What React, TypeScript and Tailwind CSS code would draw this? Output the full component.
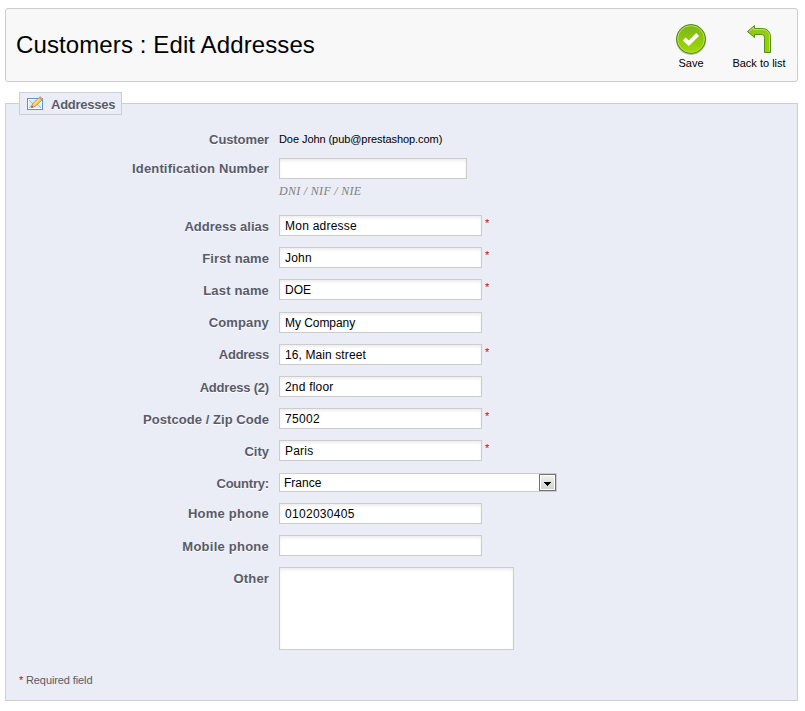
import { useState } from 'react';

type Field = {
  label: string;
  value: string;
  row: string;
  labelStyle: string;
  width?: string;
  required?: boolean;
  hint?: string;
  tracking?: string;
};

const identityFields: Field[] = [
  { label: 'Identification Number', value: '', row: 'h-[57px]', labelStyle: 'pt-[3px] tracking-[0.16px]', width: 'w-[188px]', hint: 'DNI / NIF / NIE' },
  { label: 'Address alias', value: 'Mon adresse', row: 'h-8', labelStyle: 'pt-1', required: true, tracking: 'tracking-[0.24px]' },
  { label: 'First name', value: 'John', row: 'h-8', labelStyle: 'pt-1 tracking-[0.1px]', required: true, tracking: 'tracking-[0.2px]' },
  { label: 'Last name', value: 'DOE', row: 'h-[33px]', labelStyle: 'pt-1 tracking-[0.16px]', required: true },
  { label: 'Company', value: 'My Company', row: 'h-8', labelStyle: 'pt-[3px] tracking-[0.16px]', tracking: 'tracking-[-0.05px]' },
  { label: 'Address', value: '16, Main street', row: 'h-8', labelStyle: 'pt-[3px] tracking-[-0.27px]', required: true, tracking: 'tracking-[0.1px]' },
  { label: 'Address (2)', value: '2nd floor', row: 'h-8', labelStyle: 'pt-1 tracking-[-0.2px]', tracking: 'tracking-[0.2px]' },
  { label: 'Postcode / Zip Code', value: '75002', row: 'h-8', labelStyle: 'pt-1 tracking-[0.05px]', required: true, tracking: 'tracking-[0.3px]' },
  { label: 'City', value: 'Paris', row: 'h-[33px]', labelStyle: 'pt-1', required: true, tracking: 'tracking-[0.2px]' },
];

const phoneFields: Field[] = [
  { label: 'Home phone', value: '0102030405', row: 'h-8', labelStyle: 'pt-[3px] tracking-[0.24px]', tracking: 'tracking-[0.3px]' },
  { label: 'Mobile phone', value: '', row: 'h-8', labelStyle: 'pt-1 tracking-[0.24px]' },
];

const inputStyle =
  'block border border-[#cccccc] bg-white text-black shadow-[inset_0_2px_3px_#eeeeee] focus:outline-none';

function Label({ text, style }: { text: string; style: string }) {
  return (
    <label
      className={`w-[250px] shrink-0 text-right text-[13px] leading-4 font-bold text-[#585a69] [text-shadow:0_1px_0_#ffffff] ${style}`}
    >
      {text}
    </label>
  );
}

function TextRow({ field }: { field: Field }) {
  const [value, setValue] = useState(field.value);

  return (
    <div className={`flex ${field.row}`}>
      <Label text={field.label} style={field.labelStyle} />
      <div className="ml-[10px]">
        <div className="flex">
          <input
            type="text"
            className={`${inputStyle} h-[21px] px-[5px] text-[12px] ${field.width || 'w-[203px]'} ${field.tracking || ''}`}
            value={value}
            onChange={(e) => setValue(e.target.value)}
          />
          {field.required && <span className="ml-[3px] text-[11px] leading-4 text-[#cc0000]">*</span>}
        </div>
        {field.hint && (
          <p className="mt-[5px] font-['Liberation_Serif',serif] text-[12px] leading-[14px] tracking-[0.3px] text-[#7f7f7f] italic">
            {field.hint}
          </p>
        )}
      </div>
    </div>
  );
}

function SaveIcon() {
  return (
    <svg className="h-8 w-8" viewBox="0 0 32 32">
      <defs>
        <linearGradient id="save-fill" x1="0" y1="0" x2="0" y2="1">
          <stop offset="0" stopColor="#79b51c" />
          <stop offset="1" stopColor="#a3d900" />
        </linearGradient>
      </defs>
      <ellipse cx="16" cy="17" rx="15" ry="15" fill="#b9b9b9" />
      <circle cx="16" cy="16" r="14.5" fill="url(#save-fill)" stroke="#4b8f0b" />
      <circle cx="16" cy="16" r="13.3" fill="none" stroke="#b6dc5c" />
      <path d="M9.2 16l4.6 4.3 8.8-8.8" fill="none" stroke="#ffffff" strokeWidth="4" />
    </svg>
  );
}

function BackIcon() {
  return (
    <svg className="h-8 w-8" viewBox="0 0 32 32">
      <defs>
        <linearGradient id="back-fill" x1="0" y1="0" x2="1" y2="1">
          <stop offset="0" stopColor="#8cc51c" />
          <stop offset="1" stopColor="#9bd100" />
        </linearGradient>
      </defs>
      <path
        d="M4.5 8.5L11.5 2.5V5.5H18.5C24.5 5.5 27.5 9 27.5 14.5V29.5H21.5V15.5C21.5 12.5 20.5 11.5 17.5 11.5H11.5V14.5Z"
        fill="url(#back-fill)"
        stroke="#4f930d"
        strokeLinejoin="round"
      />
      <path d="M6 8.5L10.5 4.6V6.5H18.5C24 6.5 26.5 9.5 26.5 14.5V28.5" fill="none" stroke="#bddf6b" />
    </svg>
  );
}

function EditIcon() {
  return (
    <svg className="h-4 w-4" viewBox="0 0 16 16">
      <rect x="0.5" y="2.5" width="15" height="11" fill="#dcebfb" stroke="#5b91cf" />
      <rect x="1.5" y="3.5" width="13" height="9" fill="none" stroke="#ffffff" />
      <path d="M2 12L6.5 8M14 12L10 8M2 4l5 5" fill="none" stroke="#9bbde5" />
      <path d="M4.5 11.5L5.5 8L12 1.5L15 4L8 10.5Z" fill="#f6ce58" stroke="#bd862f" strokeWidth="0.8" />
      <path d="M7 8.5L12.5 3" stroke="#fff0a5" />
      <path d="M12 1.5L13.3 0.6L15.8 3L15 4Z" fill="#ecaa8c" stroke="#c18069" strokeWidth="0.5" />
      <path d="M4.3 11.8L4.8 10L6.2 11Z" fill="#343434" />
    </svg>
  );
}

export default function App() {
  const [other, setOther] = useState('');

  return (
    <div className="h-[711px] w-[805px] bg-white pt-2 pl-[5px] font-['Liberation_Sans',Arial,sans-serif]">
      <header className="flex h-[74px] w-[793px] justify-between rounded-[3px] border border-[#cccccc] bg-[#f8f8f8] pl-[10px]">
        <h1 className="pt-[21px] text-[24px] leading-[30px] tracking-[0.11px] text-black">Customers : Edit Addresses</h1>
        <div className="flex pt-[14px] pr-[11px] text-[11px] leading-[14px] text-black">
          <button className="flex w-[32px] flex-col items-center">
            <SaveIcon />
            <span className="mt-[1px]">Save</span>
          </button>
          <button className="ml-[25px] flex w-[54px] flex-col items-center whitespace-nowrap">
            <BackIcon />
            <span className="mt-[1px]">Back to list</span>
          </button>
        </div>
      </header>

      <fieldset className="mt-[10px] w-[793px]">
        <div className="relative z-10 ml-[14px] flex h-[23px] w-[103px] items-center border border-[#ccced7] bg-[#eaedf5] pl-[7px] text-[13px] font-bold text-[#585a69]">
          <EditIcon />
          <span className="ml-2 pt-[2px] tracking-[-0.25px] [text-shadow:0_1px_0_#ffffff]">Addresses</span>
        </div>
        <div className="-mt-3 h-[598px] border border-[#ccced7] bg-[#eaedf5] pt-[25px] pl-[13px]">
          <div className="flex h-[29px]">
            <Label text="Customer" style="pt-[3px] tracking-[-0.1px]" />
            <span className="ml-[10px] pt-[2px] text-[11px] leading-4 tracking-[-0.07px] text-black">
              Doe John (pub@prestashop.com)
            </span>
          </div>
          {identityFields.map((field) => (
            <TextRow key={field.label} field={field} />
          ))}
          <div className="flex h-[30px]">
            <Label text="Country:" style="pt-[3px] tracking-[-0.2px]" />
            <button className="ml-[10px] flex h-[19px] w-[278px] items-center justify-between border border-[#cccccc] bg-white pl-1 text-[12px] text-black">
              <span>France</span>
              <span className="flex h-[17px] w-[17px] items-center justify-center border border-[#707070] bg-gradient-to-b from-[#f2f2f2] to-[#cfcfcf] pt-[2px] shadow-[inset_0_0_0_1px_#ffffff]">
                <svg className="h-1 w-[7px]" viewBox="0 0 7 4" shapeRendering="crispEdges">
                  <path d="M0 0H7V1H6V2H5V3H4V4H3V3H2V2H1V1H0Z" />
                </svg>
              </span>
            </button>
          </div>
          {phoneFields.map((field) => (
            <TextRow key={field.label} field={field} />
          ))}
          <div className="flex h-[105px]">
            <Label text="Other" style="pt-1 tracking-[0.16px]" />
            <textarea
              className={`${inputStyle} ml-[10px] h-[83px] w-[235px] resize-none`}
              value={other}
              onChange={(e) => setOther(e.target.value)}
            />
          </div>
          <p className="flex text-[11px] leading-4 tracking-[-0.1px] text-[#585a69]">
            <span className="w-[7px] text-[#cc0000]">*</span>
            <span>Required field</span>
          </p>
        </div>
      </fieldset>
    </div>
  );
}
